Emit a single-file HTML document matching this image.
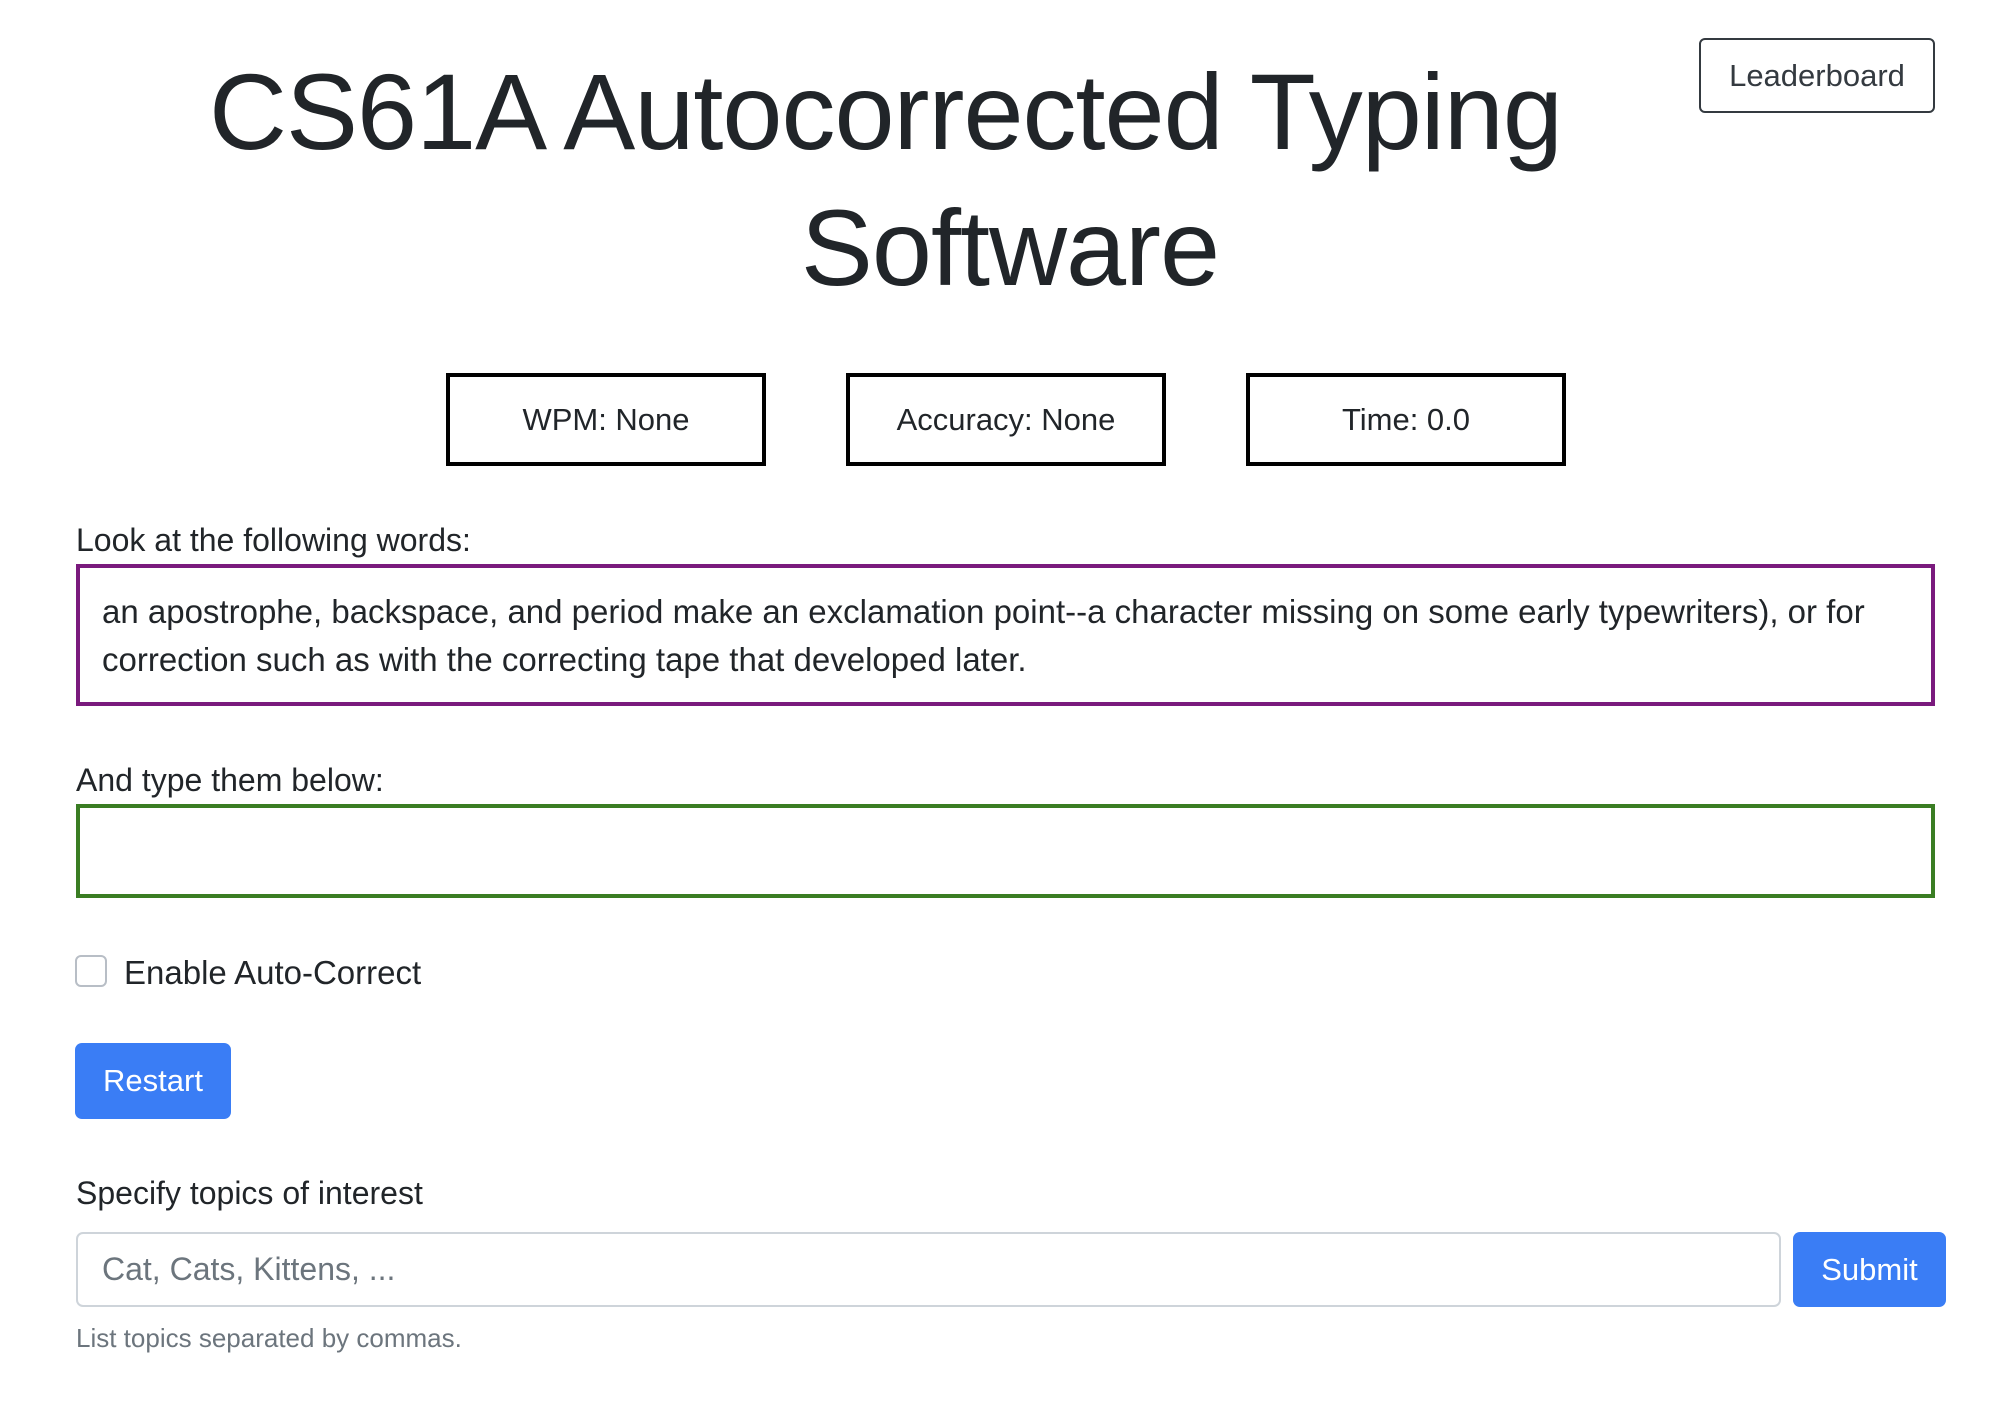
<!DOCTYPE html>
<html><head><meta charset="utf-8"><style>
*{box-sizing:border-box;margin:0;padding:0}
body{width:2014px;height:1420px;background:#fff;font-family:"Liberation Sans",sans-serif;color:#212529;position:relative;overflow:hidden}
.a{position:absolute}
.t{position:absolute;font-weight:400;font-size:108px;line-height:136px;color:#212529;letter-spacing:-1px;white-space:nowrap}
.lb{left:1699px;top:38px;width:236px;height:75px;border:2px solid #343a40;border-radius:6px;font-size:31px;color:#343a40;display:flex;align-items:center;justify-content:center}
.st{top:373px;width:320px;height:93px;border:4px solid #000;font-size:31px;display:flex;align-items:center;justify-content:center;color:#212529}
.lbl{font-size:32px;left:76px}
.words{left:76px;top:564px;width:1859px;height:142px;border:4px solid #7a1a7d;padding:20px 22px 0 22px;font-size:33px;line-height:48px}
.typ{left:76px;top:804px;width:1859px;height:94px;border:4px solid #3a7d23}
.cb{left:75px;top:955px;width:32px;height:32px;border:2px solid #b8bec6;border-radius:6px}
.btn{background:#3a7df5;color:#fff;border-radius:7px;font-size:31px;display:flex;align-items:center;justify-content:center}
.inp{left:76px;top:1232px;width:1705px;height:75px;border:2px solid #ced4da;border-radius:7px;font-size:32px;color:#6c757d;padding-left:24px;display:flex;align-items:center}
</style></head><body>
<div class="t" style="left:209px;top:44px">CS61A Autocorrected Typing</div>
<div class="t" style="left:610px;width:800px;text-align:center;top:180px">Software</div>
<div class="a lb">Leaderboard</div>
<div class="a st" style="left:446px">WPM: None</div>
<div class="a st" style="left:846px">Accuracy: None</div>
<div class="a st" style="left:1246px">Time: 0.0</div>
<div class="a lbl" style="top:522px">Look at the following words:</div>
<div class="a words">an apostrophe, backspace, and period make an exclamation point--a character missing on some early typewriters), or for correction such as with the correcting tape that developed later.</div>
<div class="a lbl" style="top:762px">And type them below:</div>
<div class="a typ"></div>
<div class="a cb"></div>
<div class="a lbl" style="left:124px;top:954px;font-size:33px">Enable Auto-Correct</div>
<div class="a btn" style="left:75px;top:1043px;width:156px;height:76px">Restart</div>
<div class="a lbl" style="top:1175px">Specify topics of interest</div>
<div class="a inp">Cat, Cats, Kittens, ...</div>
<div class="a btn" style="left:1793px;top:1232px;width:153px;height:75px">Submit</div>
<div class="a" style="left:76px;top:1323px;font-size:26px;color:#6c757d">List topics separated by commas.</div>
</body></html>
